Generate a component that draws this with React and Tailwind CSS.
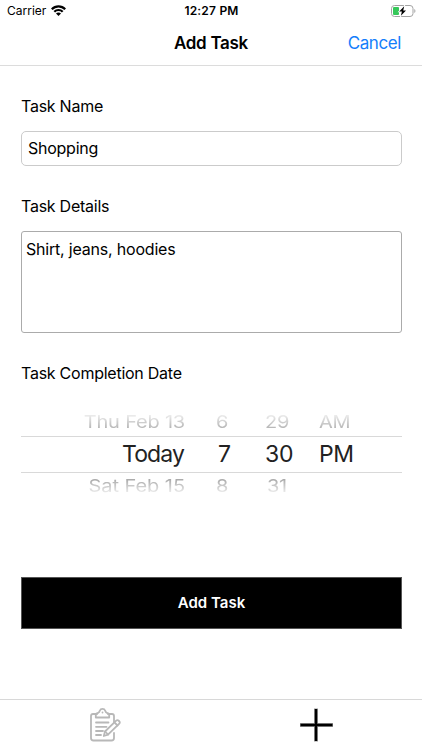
import React, { useState } from 'react';

const StatusBar = () => (
    <div className="flex h-[22px] items-center justify-between pl-[7px] pr-[6px] text-[12px]">
        <div className="flex w-[80px] items-center gap-[5px]">
            <span>Carrier</span>
            <svg width="15" height="11" viewBox="0 0 15 11" className="-mt-px" fill="none" stroke="#000" strokeWidth="2.2">
                <path d="M0.8 4.2C4.5 0.3 10.5 0.3 14.2 4.2" />
                <path d="M3.3 6.8C5.6 4.4 9.4 4.4 11.7 6.8" />
                <path d="M7.5 10.9L5 8.4C6.4 7.2 8.6 7.2 10 8.4Z" fill="#000" stroke="none" />
            </svg>
        </div>
        <span className="tracking-[0.2px] font-semibold">12:27 PM</span>
        <div className="flex w-[80px] justify-end">
            <svg width="25" height="12" viewBox="0 0 25 12">
                <rect x="0.5" y="0.5" width="21.5" height="11" rx="3" fill="#fff" stroke="#a3a3a3" />
                <rect x="2" y="2" width="6" height="8" rx="1" fill="#35c759" />
                <path d="M13.2 1.2L8.2 6.6H10.9L9.9 10.8L15 5.4H12.2Z" fill="#000" stroke="#fff" strokeWidth="1.4" paintOrder="stroke" />
                <path d="M23.3 4C24.8 4.6 24.8 7.4 23.3 8Z" fill="#a3a3a3" />
            </svg>
        </div>
    </div>
);

const Header = () => (
    <div className="grid h-[43px] grid-cols-3 items-center px-[21px]">
        <span />
        <h1 className="text-center text-[17px] font-semibold tracking-[-0.3px]">Add Task</h1>
        <button className="text-right text-[17px] tracking-[-0.4px] text-[#147efb]">Cancel</button>
    </div>
);

// rows above and below the selection fade out at the edge of the wheel
const DatePicker = () => (
    <div className="flex h-[96px] flex-col">
        <div className="flex h-[30px] items-center pt-[2px] text-[20px] text-[#a8a8a8] [mask-image:linear-gradient(to_bottom,transparent_15%,black_85%)]">
            <span className="w-[164px] scale-y-85 text-right tracking-[-0.2px]">Thu Feb 13</span>
            <span className="ml-[31px] w-[49px] scale-y-85">6</span>
            <span className="w-[54px] scale-y-85">29</span>
            <span className="scale-y-85">AM</span>
        </div>
        <div className="flex h-[37px] items-center border-y border-[#d9d9d9] text-[23px] text-[#222]">
            <span className="w-[163px] text-right tracking-[-0.9px]">Today</span>
            <span className="ml-[34px] w-[47px]">7</span>
            <span className="w-[54px]">30</span>
            <span className="tracking-[-0.5px]">PM</span>
        </div>
        <div className="flex h-[29px] items-center pb-[3px] text-[20px] text-[#a8a8a8] [mask-image:linear-gradient(to_bottom,black_20%,transparent_82%)]">
            <span className="w-[164px] scale-y-85 text-right tracking-[-0.05px]">Sat Feb 15</span>
            <span className="ml-[31px] w-[51px] scale-y-85">8</span>
            <span className="scale-y-85">31</span>
        </div>
    </div>
);

const TabBar = () => (
    <div className="grid h-[51px] grid-cols-2 items-center justify-items-center border-t border-[#d8d8d8]">
        <button>
            <svg width="32" height="34" viewBox="0 0 32 34" fill="none" stroke="#b8b8b8" strokeWidth="1.8" strokeLinejoin="round" strokeLinecap="round">
                <path d="M7 6H3Q1 6 1 8V30Q1 32.5 3.5 32.5H21.5Q24 32.5 24 30V25M24 14V8Q24 6 22 6H18" />
                <path d="M5.8 9.5V7.2Q5.8 5.5 8 5Q9.3 4.5 9.8 2.8Q10.5 0.9 12.5 0.9Q14.5 0.9 15.2 2.8Q15.7 4.5 17 5Q19.2 5.5 19.2 7.2V9.5Z" />
                <path d="M12.5 4.4V4.5M6 14.5H18.5M6 18.8H16.5M6 23H13M6 27H11" />
                <path d="M15 23.5L26.2 12.6Q27.5 11.5 29 13Q30.5 14.5 29.3 15.7L18 26.7L13.8 28Z" fill="#fff" />
                <path d="M24.4 14.4L27.5 17.5M15.2 23.5L18 26.5" />
            </svg>
        </button>
        <button>
            <svg width="34" height="34" viewBox="0 0 34 34">
                <path d="M16 0.5V33.5M0 17H33" stroke="#9a9a9a" strokeWidth="4" />
                <path d="M16 1V33M0.5 17H32.5" stroke="#000" strokeWidth="2.4" />
            </svg>
        </button>
    </div>
);

const App = () => {
    const [name, setName] = useState('Shopping');
    const [details, setDetails] = useState('Shirt, jeans, hoodies');

    return (
        <div className="flex h-[750px] w-[422px] flex-col bg-white font-[Inter,sans-serif] text-black">
            <div className="border-b border-[#dcdcdc]">
                <StatusBar />
                <Header />
            </div>
            <form className="flex flex-1 flex-col pt-[28px] pr-[20px] pl-[21px] text-[16px] tracking-[-0.25px]">
                <label className="h-6 leading-6">Task Name</label>
                <input
                    value={name}
                    onChange={(e) => setName(e.target.value)}
                    className="mt-[13px] h-[35px] rounded-[5px] border border-[#cbcbcb] px-[6px] pb-[2px]"
                />
                <label className="mt-[28px] h-6 leading-6">Task Details</label>
                <textarea
                    value={details}
                    onChange={(e) => setDetails(e.target.value)}
                    className="mt-[13px] h-[102px] resize-none rounded-[3px] border border-[#ababab] px-[4px] py-[5px] leading-6 tracking-[-0.2px]"
                />
                <label className="mt-[28px] mb-[21px] h-6 leading-6">Task Completion Date</label>
                <DatePicker />
                <button type="button" className="mt-[75px] h-[52px] border border-[#555] bg-black text-[15px] font-semibold tracking-normal text-white">
                    Add Task
                </button>
            </form>
            <TabBar />
        </div>
    );
};

export default App;
